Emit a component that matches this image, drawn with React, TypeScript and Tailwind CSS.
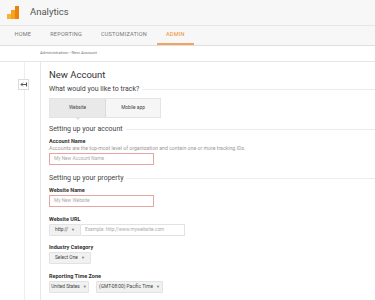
import React from "react";

function Logo() {
    return (
        <svg width="13" height="13" viewBox="0 0 13 13">
            <rect x="0" y="8" width="4" height="5" fill="#f9b233" />
            <rect x="4" y="4" width="4" height="9" fill="#f6a21c" />
            <rect x="8" y="0" width="4" height="13" fill="#e8830c" />
        </svg>
    );
}

function Caret() {
    return <span className="ml-[3px] text-[4px] text-[#777]">▼</span>;
}

function SectionTitle({ children, className = "" }: { children: string; className?: string }) {
    return (
        <div className={"flex items-center h-[10px] " + className}>
            <span className="text-[7px] text-[#444] whitespace-nowrap">{children}</span>
            <div className="flex-1 h-px bg-[#ececec] ml-[3px]"></div>
        </div>
    );
}

function Label({ children, className = "" }: { children: string; className?: string }) {
    return <div className={"h-[8px] leading-[8px] text-[5.5px] font-bold text-[#333] " + className}>{children}</div>;
}

function Dropdown({ children, className = "" }: { children: string; className?: string }) {
    return (
        <div className={"h-[12px] flex items-center whitespace-nowrap px-[5px] bg-[#f1f1f1] border border-[#e2e2e2] rounded-[1px] text-[4.8px] text-[#444] " + className}>
            {children}
            <Caret />
        </div>
    );
}

export default function App() {
    const tabs = ["Home", "Reporting", "Customization", "Admin"];
    return (
        <div className="w-[375px] h-[300px] overflow-hidden bg-white font-['Roboto',sans-serif] text-[#333]">
            <header className="h-[26px] bg-[#f7f7f7] border-b border-[#e6e6e6] flex items-center pl-[7px]">
                <Logo />
                <span className="ml-[10px] text-[9.5px] text-[#555]">Analytics</span>
            </header>
            <nav className="h-[20px] bg-[#f7f7f7] border-b border-[#dedede] flex pl-[5px] text-[5.6px] tracking-[0.2px] text-[#777] uppercase">
                {tabs.map((t) => (
                    <div
                        key={t}
                        className={
                            "px-[9.5px] flex items-center border-b-2 " +
                            (t === "Admin" ? "border-[#f5a35a] text-[#f08b27]" : "border-transparent")
                        }
                    >
                        {t}
                    </div>
                ))}
            </nav>
            <div className="h-[16px] border-b border-[#e6e6e6] flex items-center pl-[40px] text-[4.3px] text-[#777]">
                Administration › New Account
            </div>
            <div className="flex h-full">
                <aside className="w-[41px] shrink-0 border-r border-[#e8e8e8] relative">
                    <div className="absolute left-[24px] top-0 bottom-0 w-px bg-[#eeeeee]"></div>
                    <div className="absolute left-[18px] top-[17px] w-[11px] h-[11px] bg-white border border-[#dcdcdc] flex items-center justify-center">
                        <svg width="7" height="5" viewBox="0 0 7 5">
                            <path d="M6.5 0.5V4.5M6.5 2.5H1M2.8 0.7L1 2.5L2.8 4.3" stroke="#444" strokeWidth="0.9" fill="none" />
                        </svg>
                    </div>
                </aside>
                <main className="flex-1 pl-[8px]">
                    <div className="mt-[6px] h-[14px] leading-[14px] text-[9.5px] text-[#333]">New Account</div>
                    <SectionTitle className="mt-[2px]">What would you like to track?</SectionTitle>
                    <div className="mt-[4px] flex w-[112px] h-[20px] border border-[#e4e4e4] text-[4.8px] text-[#444]">
                        <div className="relative w-[56px] bg-[#e9e9e9] border-r border-[#dcdcdc] flex items-center justify-center">
                            Website
                            <div className="absolute left-1/2 -translate-x-1/2 top-full w-0 h-0 border-x-[3px] border-x-transparent border-t-[3px] border-t-[#e0e0e0]"></div>
                        </div>
                        <div className="flex-1 bg-[#f6f6f6] flex items-center justify-center">Mobile app</div>
                    </div>
                    <SectionTitle className="mt-[6px]">Setting up your account</SectionTitle>
                    <Label className="mt-[3px]">Account Name</Label>
                    <div className="h-[6px] leading-[6px] text-[5.2px] text-[#999] whitespace-nowrap">
                        Accounts are the top-most level of organization and contain one or more tracking IDs.
                    </div>
                    <div className="mt-[2px] w-[105px] h-[12px] border border-[#e6a5a3] flex items-center pl-[4px] text-[4.8px] text-[#aaa]">
                        My New Account Name
                    </div>
                    <SectionTitle className="mt-[8px]">Setting up your property</SectionTitle>
                    <Label className="mt-[3px]">Website Name</Label>
                    <div className="mt-[1px] w-[105px] h-[12px] border border-[#e6a5a3] flex items-center pl-[4px] text-[4.8px] text-[#aaa]">
                        My New Website
                    </div>
                    <Label className="mt-[8px]">Website URL</Label>
                    <div className="mt-[1px] flex h-[12px]">
                        <Dropdown className="w-[32px] justify-center">http://</Dropdown>
                        <div className="w-[104px] border border-[#e2e2e2] border-l-0 flex items-center pl-[4px] text-[4.8px] text-[#aaa]">
                            Example: http://www.mywebsite.com
                        </div>
                    </div>
                    <Label className="mt-[7px]">Industry Category</Label>
                    <div className="mt-[1px] flex">
                        <Dropdown>Select One</Dropdown>
                    </div>
                    <Label className="mt-[8px]">Reporting Time Zone</Label>
                    <div className="mt-[1px] flex gap-[7px]">
                        <Dropdown className="w-[40px] justify-center px-0">United States</Dropdown>
                        <Dropdown className="w-[67px] justify-center px-0">(GMT-08:00) Pacific Time</Dropdown>
                    </div>
                </main>
            </div>
        </div>
    );
}
